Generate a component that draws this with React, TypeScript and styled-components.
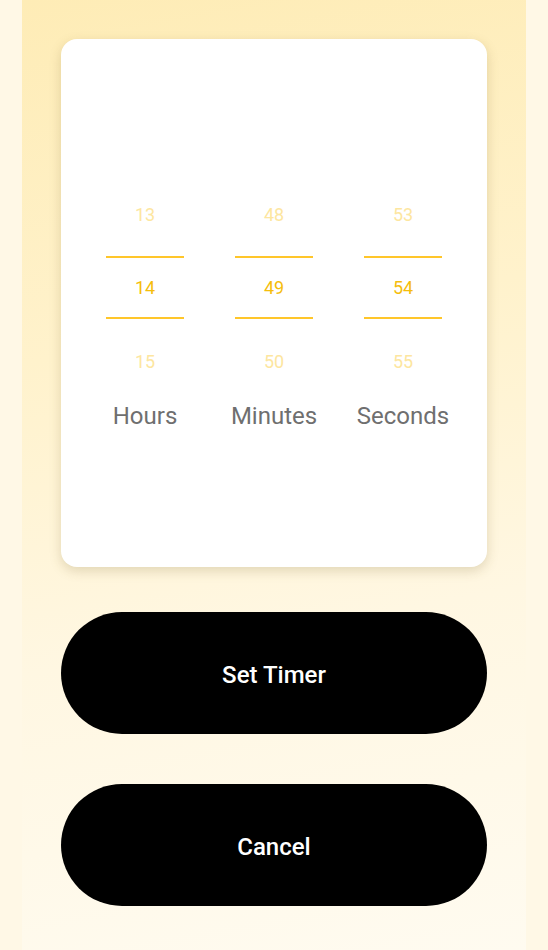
import React from 'react';
import styled, { createGlobalStyle } from 'styled-components';

const GlobalStyle = createGlobalStyle`
  html, body {
    margin: 0;
    padding: 0;
    background: #fff8e6;
    font-family: Roboto, "Noto Sans", sans-serif;
  }
`;

const columns = [
  { label: 'Hours', values: ['13', '14', '15'] },
  { label: 'Minutes', values: ['48', '49', '50'] },
  { label: 'Seconds', values: ['53', '54', '55'] },
];

const App = () => {
  return (
    <>
      <GlobalStyle />
      <Screen>
        <Card>
          <Picker>
            {columns.map((col) => (
              <Column key={col.label}>
                <SideRow>{col.values[0]}</SideRow>
                <SelectedRow>
                  <span>{col.values[1]}</span>
                </SelectedRow>
                <SideRow>{col.values[2]}</SideRow>
                <Label>{col.label}</Label>
              </Column>
            ))}
          </Picker>
        </Card>
        <Actions>
          <PillButton>Set Timer</PillButton>
          <PillButton>Cancel</PillButton>
        </Actions>
      </Screen>
    </>
  );
};

export default App;

const Screen = styled.div`
  width: 504px;
  min-height: 950px;
  margin: 0 auto;
  box-sizing: border-box;
  padding: 39px 39px 0;
  background: linear-gradient(170deg, #feecb6 0%, #fff2cc 35%, #fff7e2 65%, #fffbf0 100%);
`;

const Card = styled.div`
  height: 528px;
  box-sizing: border-box;
  padding-top: 133px;
  background: #ffffff;
  border-radius: 16px;
  box-shadow: 0 4px 12px rgba(120, 100, 40, 0.22);
`;

const Picker = styled.div`
  display: flex;
  justify-content: center;
`;

const Column = styled.div`
  width: 129px;
  display: flex;
  flex-direction: column;
  align-items: center;
`;

const SideRow = styled.div`
  height: 84px;
  display: flex;
  align-items: center;
  justify-content: center;
  font-size: 18px;
  color: #fde6a0;
`;

const SelectedRow = styled.div`
  width: 78px;
  height: 59px;
  border-top: 2px solid #ffc62a;
  border-bottom: 2px solid #ffc62a;
  display: flex;
  align-items: center;
  justify-content: center;
  font-size: 18px;
  color: #f5bd0c;
`;

const Label = styled.div`
  margin-top: -1px;
  line-height: 28px;
  font-size: 24px;
  color: #6f6f6f;
  white-space: nowrap;
`;

const Actions = styled.div`
  display: flex;
  flex-direction: column;
  gap: 50px;
  margin-top: 45px;
`;

const PillButton = styled.button`
  height: 122px;
  width: 100%;
  padding: 3px 0 0;
  border: none;
  border-radius: 61px;
  background: #000000;
  color: #ffffff;
  font-family: Roboto, "Noto Sans", sans-serif;
  font-weight: 500;
  font-size: 24px;
  cursor: pointer;
`;
